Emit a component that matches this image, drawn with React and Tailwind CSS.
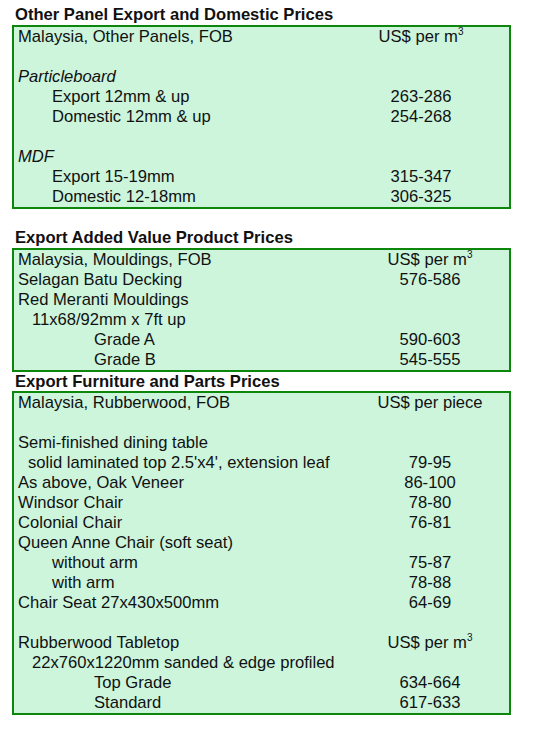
import React from "react";

const M3 = () => (
  <span>
    US$ per m<sup className="text-[10px] -top-[0.7em]">3</sup>
  </span>
);

const box1 = [
  { l: "Malaysia, Other Panels, FOB", v: <M3 />, i: 0 },
  { l: "", v: "", i: 0 },
  { l: "Particleboard", v: "", i: 0, it: true },
  { l: "Export 12mm & up", v: "263-286", i: 2 },
  { l: "Domestic 12mm & up", v: "254-268", i: 2 },
  { l: "", v: "", i: 0 },
  { l: "MDF", v: "", i: 0, it: true },
  { l: "Export 15-19mm", v: "315-347", i: 2 },
  { l: "Domestic 12-18mm", v: "306-325", i: 2 },
];

const box2 = [
  { l: "Malaysia, Mouldings, FOB", v: <M3 />, i: 0 },
  { l: "Selagan Batu Decking", v: "576-586", i: 0 },
  { l: "Red Meranti Mouldings", v: "", i: 0 },
  { l: "11x68/92mm x 7ft up", v: "", i: 1 },
  { l: "Grade A", v: "590-603", i: 3 },
  { l: "Grade B", v: "545-555", i: 3 },
];

const box3 = [
  { l: "Malaysia, Rubberwood, FOB", v: "US$ per piece", i: 0 },
  { l: "", v: "", i: 0 },
  { l: "Semi-finished dining table", v: "", i: 0 },
  { l: "solid laminated top 2.5'x4', extension leaf", v: "79-95", i: 4 },
  { l: "As above, Oak Veneer", v: "86-100", i: 0 },
  { l: "Windsor Chair", v: "78-80", i: 0 },
  { l: "Colonial Chair", v: "76-81", i: 0 },
  { l: "Queen Anne Chair (soft seat)", v: "", i: 0 },
  { l: "without arm", v: "75-87", i: 2 },
  { l: "with arm", v: "78-88", i: 2 },
  { l: "Chair Seat 27x430x500mm", v: "64-69", i: 0 },
  { l: "", v: "", i: 0 },
  { l: "Rubberwood Tabletop", v: <M3 />, i: 0 },
  { l: "22x760x1220mm sanded & edge profiled", v: "", i: 1 },
  { l: "Top Grade", v: "634-664", i: 3 },
  { l: "Standard", v: "617-633", i: 3 },
];

const indentCls = ["pl-[4px]", "pl-[18px]", "pl-[38px]", "pl-[80px]", "pl-[14px]"];

function Box({ rows, valMr }) {
  return (
    <div className="ml-[12px] w-[499px] border-2 border-[#0c870c] bg-[#ccf5dc]">
      {rows.map((r, k) => (
        <div key={k} className="flex h-[20px] leading-[20px]">
          <div className={`flex-1 whitespace-nowrap ${indentCls[r.i]} ${r.it ? "italic" : ""}`}>
            {r.l}
          </div>
          <div className={`w-[130px] text-center whitespace-nowrap ${valMr}`}>{r.v}</div>
        </div>
      ))}
    </div>
  );
}

function Heading({ children, cls }) {
  return (
    <div className={`pl-[15px] font-bold text-[16.6px] leading-[20px] h-[20px] ${cls || ""}`}>
      {children}
    </div>
  );
}

export default function App() {
  return (
    <div
      className="w-[547px] h-[731px] bg-white text-[16.6px] text-[#111111] pt-[5px]"
      style={{ fontFamily: '"Liberation Sans", Arial, sans-serif' }}
    >
      <Heading>Other Panel Export and Domestic Prices</Heading>
      <Box rows={box1} valMr="mr-[23px]" />
      <Heading cls="mt-[19px]">Export Added Value Product Prices</Heading>
      <Box rows={box2} valMr="mr-[14px]" />
      <Heading cls="!h-[19px]">Export Furniture and Parts Prices</Heading>
      <Box rows={box3} valMr="mr-[14px]" />
    </div>
  );
}
